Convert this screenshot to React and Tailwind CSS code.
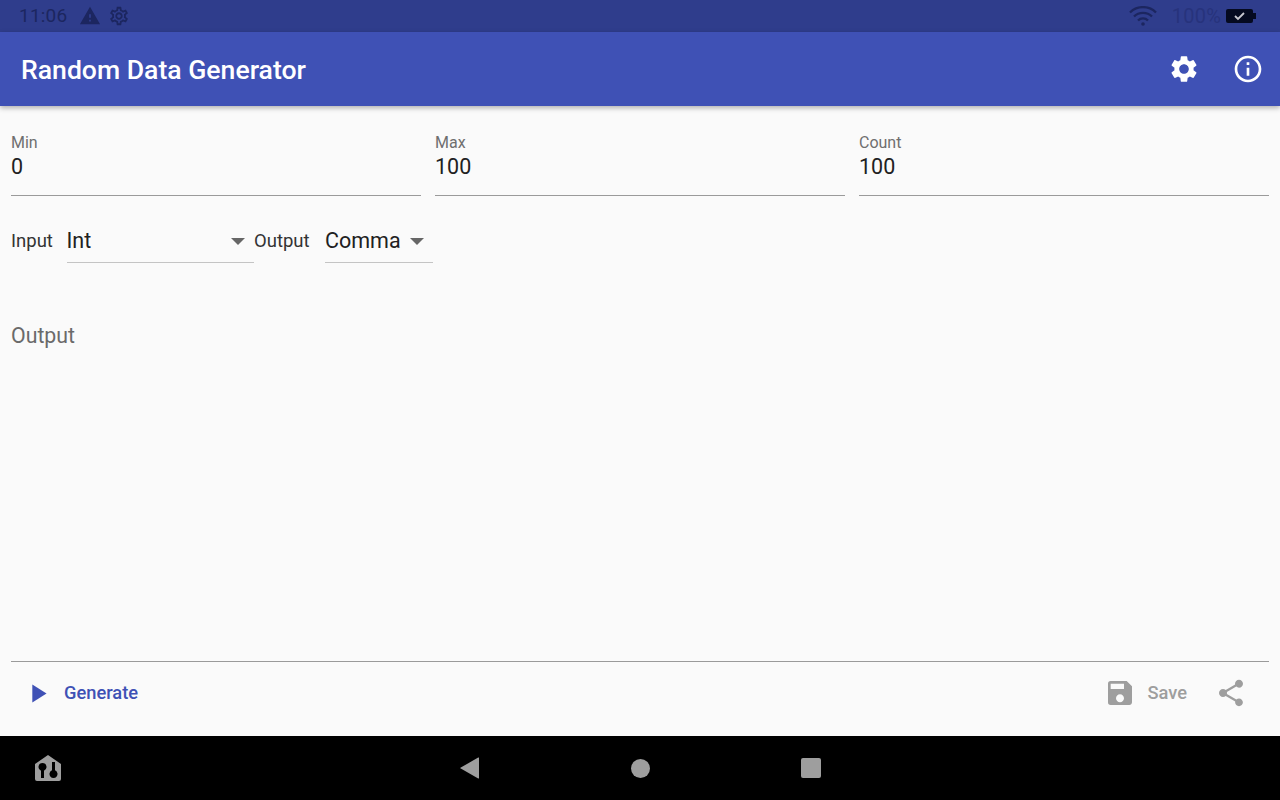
import React from "react";
import { MdSettings, MdInfoOutline, MdSave, MdShare, MdPlayArrow, MdWarning, MdOutlineSettings } from "react-icons/md";

const NumberField = ({ label, value }) => (
  <div className="flex-1 h-[65px] border-b border-[#9a9a9a] pt-[1px]">
    <div className="text-[16px] leading-[22px] text-[#6f6f6f]">{label}</div>
    <div className="text-[21.5px] leading-[26px] text-[#212121]">{value}</div>
  </div>
);

const Dropdown = ({ value, width }) => (
  <div className={"flex items-center justify-between h-[44px] border-b border-[#c4c4c4] pt-[2px] pr-[9px] text-[21.5px] text-[#212121] " + width}>
    <span>{value}</span>
    <svg width="14" height="7" viewBox="0 0 14 7">
      <path d="M0 0h14L7 7z" fill="#666666" />
    </svg>
  </div>
);

export default function App() {
  return (
    <div className="w-[1280px] h-[800px] flex flex-col bg-[#fafafa] overflow-hidden font-['Roboto',sans-serif]">
      <div className="h-8 shrink-0 bg-[#2f3d8c] flex items-center justify-between pl-[19px] pr-[24px] text-[#1c2660]">
        <div className="flex items-center">
          <span className="text-[19px] tracking-[0.2px]">11:06</span>
          <MdWarning className="ml-[12px] text-[22px]" />
          <MdOutlineSettings className="ml-[7px] text-[22px]" />
        </div>
        <div className="flex items-center">
          <svg width="28" height="20" viewBox="0 0 28 20" fill="none" stroke="#1c2660" strokeWidth="2.4">
            <path d="M1 6.500a18.500 18.500 0 0 1 26 0" />
            <path d="M5 10.500a13 13 0 0 1 18 0" />
            <path d="M9 14.500a7 7 0 0 1 10 0" />
            <circle cx="14" cy="18" r="1.800" fill="#1c2660" stroke="none" />
          </svg>
          <span className="ml-[15px] text-[20px] tracking-[0.2px] text-[#27337c]">100%</span>
          <svg width="30" height="14" viewBox="0 0 30 14" className="ml-[5px]">
            <rect x="0" y="0" width="27" height="14" rx="2" fill="#050a20" />
            <rect x="27" y="4" width="3" height="6" fill="#050a20" />
            <path d="M9 7l3 3 6-6" fill="none" stroke="#c8c8d0" strokeWidth="1.8" />
          </svg>
        </div>
      </div>

      <div className="h-[74px] shrink-0 bg-[#3f51b5] flex items-center justify-between pl-[21px] pr-[16px] text-white shadow-[0_2px_5px_rgba(0,0,0,0.3)] z-10">
        <div className="text-[26.6px] font-medium pt-[1px]">Random Data Generator</div>
        <div className="flex items-center gap-[32px]">
          <MdSettings className="text-[32px]" />
          <MdInfoOutline className="text-[32px]" />
        </div>
      </div>

      <div className="flex-1 flex flex-col px-[11px]">
        <div className="flex gap-[14px] pt-[25px]">
          <NumberField label="Min" value="0" />
          <NumberField label="Max" value="100" />
          <NumberField label="Count" value="100" />
        </div>

        <div className="flex items-start mt-[23px] h-[44px]">
          <span className="text-[18.500px] leading-[44px] text-[#333333] w-[55.500px]">Input</span>
          <Dropdown value="Int" width="w-[187.500px]" />
          <span className="text-[18.500px] leading-[44px] text-[#333333] w-[71px]">Output</span>
          <Dropdown value="Comma" width="w-[108px]" />
        </div>

        <div className="flex-1 pt-[60px] text-[21.300px] leading-[26px] text-[#6a6a6a]">Output</div>

        <div className="border-t border-[#9a9a9a] h-[75px] flex items-center justify-between pb-[12px]">
          <div className="flex items-center pl-[11px]">
            <MdPlayArrow className="text-[31px] text-[#3f51b5]" />
            <span className="ml-[11px] text-[18.300px] font-medium text-[#3f51b5]">Generate</span>
          </div>
          <div className="flex items-center text-[#9e9e9e] pr-[22px]">
            <MdSave className="text-[32px]" />
            <span className="ml-[11px] text-[18.300px] font-medium">Save</span>
            <MdShare className="ml-[28px] text-[32px]" />
          </div>
        </div>
      </div>

      <div className="h-16 shrink-0 bg-black relative flex items-center justify-center">
        <svg width="28" height="28" viewBox="0 0 28 28" className="absolute left-[34px] top-[18px]">
          <path
            fillRule="evenodd"
            fill="#9e9e9e"
            d="M14 1L1 10v15a2 2 0 0 0 2 2h22a2 2 0 0 0 2-2V10z M8.500 9a4 4 0 0 1 1.500 7.700V24H7v-7.300A4 4 0 0 1 8.500 9z M18 8h3v8.300a4 4 0 1 1-3 0z"
          />
        </svg>
        <div className="flex items-center">
          <svg width="20" height="22" viewBox="0 0 20 22" className="mr-[151px]">
            <path d="M19 1v20a.5.5 0 0 1-.8.4L.8 11.500a.5.5 0 0 1 0-1L18.200.6A.5.5 0 0 1 19 1z" fill="#9e9e9e" />
          </svg>
          <div className="w-[19px] h-[19px] rounded-full bg-[#9e9e9e]" />
          <div className="w-5 h-5 ml-[151px] rounded-[2px] bg-[#9e9e9e]" />
        </div>
      </div>
    </div>
  );
}
